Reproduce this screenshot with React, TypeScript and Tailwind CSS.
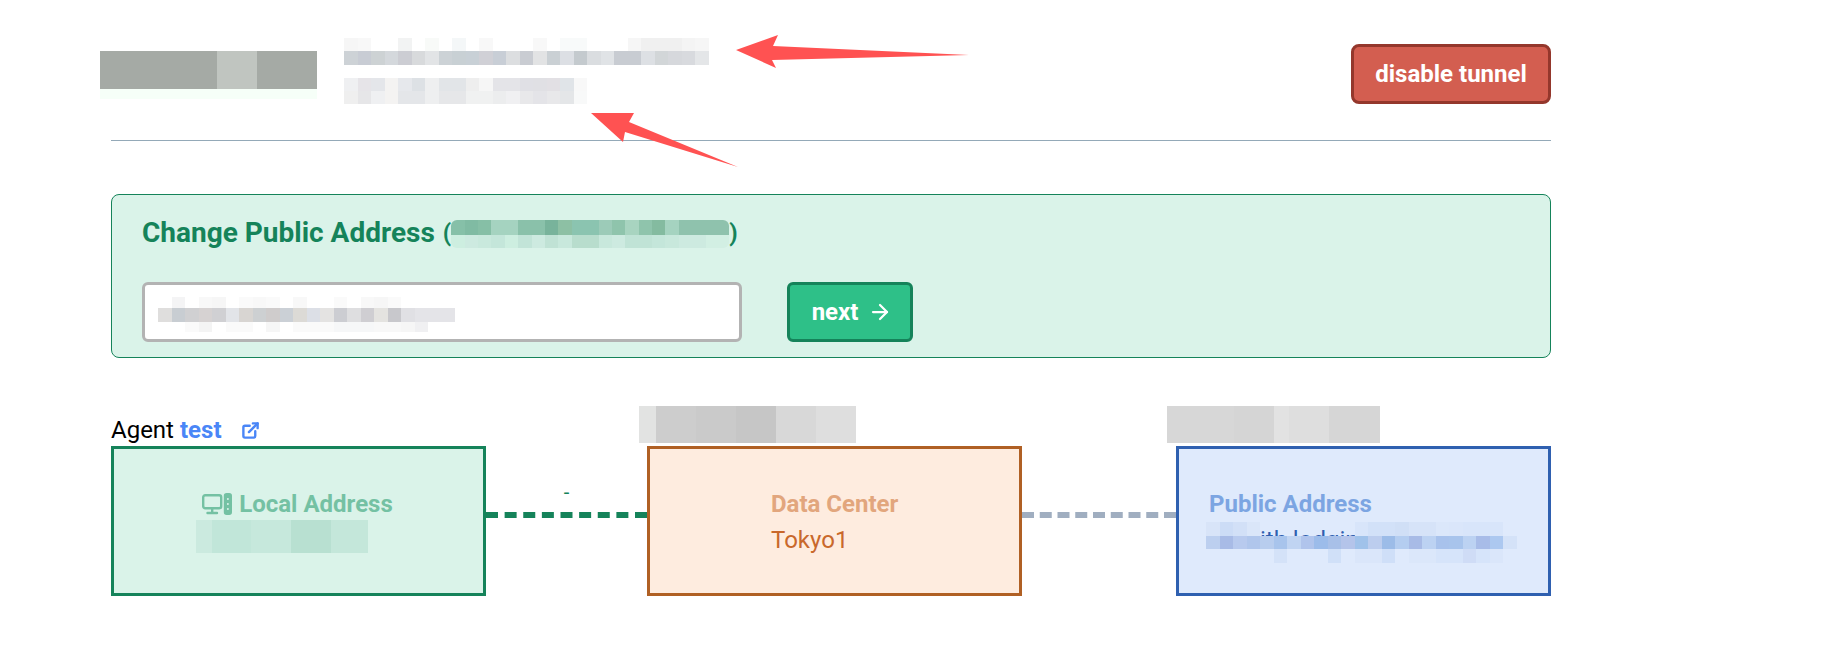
import { ArrowRight, ExternalLink } from 'lucide-react';

// blurred-out blocks of the screenshot, widths given per colour or as one cell size
function Mosaic({ cells, cell, widths, className }: { cells: string[]; cell?: number; widths?: number[]; className?: string }) {
  return (
    <div className={`flex ${className ?? ''}`}>
      {cells.map((c, i) => (
        <div key={i} className="h-full shrink-0" style={{ width: widths ? widths[i] : cell, backgroundColor: c }} />
      ))}
    </div>
  );
}

function PcIcon() {
  return (
    <svg width="30" height="22" viewBox="0 0 30 22" fill="none" stroke="currentColor" strokeWidth="2.4" strokeLinecap="round" strokeLinejoin="round">
      <rect x="1.2" y="2.2" width="18" height="13" rx="2" />
      <path d="M10.2 15.5v4M5.5 20h9.5" />
      <rect x="23" y="1.2" width="5.8" height="19.6" rx="1.6" fill="currentColor" />
      <circle cx="25.9" cy="6" r="1" fill="#daf3e9" stroke="none" />
      <circle cx="25.9" cy="11" r="1" fill="#daf3e9" stroke="none" />
      <circle cx="25.9" cy="16" r="1" fill="#daf3e9" stroke="none" />
    </svg>
  );
}

export default function App() {
  return (
    <div className="relative w-[1830px] h-[666px] overflow-hidden bg-white font-['Roboto',sans-serif]">
      <div className="w-[1440px] ml-[111px]">
        <header className="h-[141px] border-b border-[#94a9b8] flex items-start justify-between">
          <div className="flex">
            <div className="-ml-[11px] mt-[51px] w-[217px]">
              <Mosaic className="h-[38px]" widths={[117, 40, 60]} cells={['#a5aaa5', '#c0c5c0', '#a5aaa5']} />
              <div className="h-[10px] bg-[#f6fff8]" />
            </div>
            <div className="ml-[27px] mt-[38px] w-[364px]">
              <Mosaic className="h-[13px]" cell={13.5} cells={['#f6f6f6', '#f8f8f8', '#fff', '#fff', '#f2f3f3', '#fff', '#f8faf8', '#fff', '#f4f7f8', '#fff', '#f8f8f8', '#fff', '#fff', '#fff', '#f8f8f8', '#fff', '#f8fafa', '#f8fafa', '#fff', '#fff', '#fff', '#f6f6f6', '#f0f0f0', '#f0f0f0', '#f0f0f0', '#f4f4f4', '#f6f6f6']} />
              <Mosaic className="h-[14px]" cell={13.5} cells={['#cdd2d6', '#c8ccd4', '#cdd2d4', '#d4d8dc', '#cccdd3', '#d8dadc', '#e2e4e6', '#ccd2d6', '#c8d0d4', '#c8d0d6', '#d0d0d6', '#c8ced6', '#dcdee0', '#c9ccd2', '#e2e3e4', '#cad0d4', '#dcdfe4', '#c4cace', '#dadde0', '#e0e3e6', '#c8ccd2', '#c8ccd2', '#dde0e4', '#d2d6d8', '#d6d8dc', '#d8dade', '#e4e6e8']} />
              <div className="h-[13px]" />
              <Mosaic className="h-[13px]" cell={13.5} cells={['#eff0f2', '#e6e4e8', '#e4e6ea', '#f4f3f2', '#e6e8ec', '#dde1e5', '#eeeff0', '#e2e5e8', '#e2e5e8', '#eeeeee', '#f6f6f6', '#e4e4e8', '#e4e4e8', '#e0e0e5', '#e0e0e4', '#e2e0e4', '#e0e4e8', '#f8f8f8']} />
              <Mosaic className="h-[13px]" cell={13.5} cells={['#efefef', '#e6e6e8', '#eff0f2', '#f4f3f2', '#e4e6e9', '#e4e6e9', '#eeeff0', '#e6e7e9', '#e6e7e9', '#f0f1f1', '#f0f1f1', '#ecedee', '#f0f0f2', '#e8e8ea', '#e4e4e8', '#e8e8ea', '#e4e6e8', '#f8f9f9']} />
            </div>
          </div>
          <button className="mt-[44px] h-[60px] w-[200px] rounded-[8px] border-[3px] border-[#94372c] bg-[#d35e50] text-[24px] font-bold text-white">
            disable tunnel
          </button>
        </header>

        <section className="mt-[53px] h-[164px] rounded-[8px] border border-[#15835a] bg-[#daf3e9] pl-[30px]">
          <div className="flex items-center h-[87px] pb-[12px]">
            <h2 className="text-[28px] font-bold text-[#15835a]">Change Public Address</h2>
            <span className="ml-[8px] text-[24px] font-bold text-[#15835a]">(</span>
            <div className="w-[278px] h-[28px] mt-[3px] rounded-[6px] overflow-hidden">
              <Mosaic className="h-[15px]" cell={13.4} cells={['#86c0a8', '#80bba3', '#86bfa6', '#a5d3c0', '#a5d3c0', '#8ac1aa', '#8ac1aa', '#78b39b', '#8dc0a4', '#8bc4b0', '#8bc4b0', '#9ccbb8', '#8fc4ac', '#a8d4c0', '#8fc4ac', '#84bba0', '#a5d3c0', '#8fc2ad', '#8fc2ad', '#8fc2ad', '#8fc2ad']} />
              <Mosaic className="h-[13px]" cell={13.4} cells={['#cdeee0', '#cdeae0', '#c9e9dd', '#c4e6da', '#cdeee0', '#c2e4d8', '#cdeae0', '#c0e2d5', '#c8e8dc', '#b8ddcd', '#b8ddcd', '#c8e8dc', '#cdeae0', '#c0e3d6', '#c0e3d6', '#c4e6da', '#c8e8dc', '#cdeae0', '#cdeae0', '#d2efe3', '#d2efe3']} />
            </div>
            <span className="text-[24px] font-bold text-[#15835a]">)</span>
          </div>
          <div className="flex gap-[45px]">
            <div className="w-[600px] h-[60px] rounded-[6px] border-[3px] border-[#b3b3b3] bg-white pl-[13px] pt-[12px]">
              <Mosaic className="h-[11px]" cell={13.5} cells={['#fff', '#f4f4f5', '#fff', '#f8f8f8', '#f6f6f6', '#fff', '#fafafa', '#f8f8f8', '#fafafa', '#fff', '#f8f8f8', '#fff', '#fff', '#fafafa', '#fff', '#f8f8f8', '#f6f6f6', '#fafafa']} />
              <Mosaic className="h-[14px]" cell={13.5} cells={['#dfdedd', '#c8cdd2', '#d0d0d2', '#d6d2d2', '#d0d0d3', '#e2e4e8', '#d8d5d2', '#cdd0d2', '#cfcccc', '#cbd0d6', '#dcdad6', '#dcdfe6', '#e4e3e2', '#cccdd2', '#dedee0', '#cfced2', '#e4e3e0', '#c8c8cc', '#e0e0e4', '#e4e4e8', '#e4e4e8', '#e4e4e8']} />
              <Mosaic className="h-[10px]" cell={13.5} cells={['#fff', '#fff', '#fafafa', '#f4f4f4', '#fff', '#fafafa', '#fafafa', '#fff', '#f6f6f6', '#fff', '#fafafa', '#fafafa', '#fafafa', '#f6f7f8', '#f6f7f8', '#f6f7f8', '#f8f8f8', '#f8f8f8', '#f6f6f6', '#f0f0f2']} />
            </div>
            <button className="w-[126px] h-[60px] rounded-[6px] border-[3px] border-[#15835a] bg-[#2ec088] pl-[4px] text-[24px] font-bold text-white flex items-center justify-center gap-[10px]">
              next
              <ArrowRight className="w-[24px] h-[24px]" strokeWidth={2.25} />
            </button>
          </div>
        </section>

        <section className="mt-[48px] flex">
          <div className="w-[375px] shrink-0">
            <div className="h-[40px] flex items-end pb-[1px] text-[24px] leading-[30px] text-black">
              Agent
              <span className="ml-[6px] font-bold text-[#4a86f7]">test</span>
              <ExternalLink className="ml-[19px] mb-[5px] w-[19px] h-[19px] text-[#4a86f7]" strokeWidth={3} />
            </div>
            <div className="h-[150px] border-[3px] border-[#15835a] bg-[#daf3e9] flex flex-col items-center pt-[40px]">
              <div className="flex items-center gap-[7px] -ml-[2px] text-[24px] leading-[30px] font-bold text-[#74c1a3]">
                <PcIcon />
                Local Address
              </div>
              <Mosaic className="h-[33px] mt-[1px] -ml-[33px]" widths={[16, 39, 40, 40, 37]} cells={['#cbeadf', '#c1e6d9', '#c6e8dc', '#b8e0d1', '#c4e7da']} />
            </div>
          </div>

          <div className="w-[161px] shrink-0 flex flex-col items-center pt-[76px]">
            <span className="text-[20px] leading-[20px] text-[#15835a]">-</span>
            <div className="w-full mt-[10px] border-t-6 border-dashed border-[#15835a]" />
          </div>

          <div className="w-[375px] shrink-0">
            <div className="h-[40px] -ml-[8px]">
              <Mosaic className="h-[37px]" widths={[17, 40, 40, 40, 40, 40]} cells={['#e2e3e2', '#cdcdcd', '#cacaca', '#c6c6c6', '#d8d8d8', '#dedede']} />
            </div>
            <div className="h-[150px] border-[3px] border-[#b06024] bg-[#feecdf] pl-[121px] pt-[40px]">
              <div className="text-[24px] leading-[30px] font-bold text-[#e2a67d]">Data Center</div>
              <div className="text-[24px] leading-[42px] text-[#c9682b]">Tokyo1</div>
            </div>
          </div>

          <div className="w-[154px] shrink-0 pt-[106px]">
            <div className="w-full border-t-6 border-dashed border-[#a0aec0]" />
          </div>

          <div className="w-[375px] shrink-0">
            <div className="h-[40px] -ml-[9px]">
              <Mosaic className="h-[37px]" widths={[67, 40, 15, 40, 51]} cells={['#d7d7d7', '#d5d5d5', '#e2e2e2', '#dedede', '#d6d6d6']} />
            </div>
            <div className="relative h-[150px] border-[3px] border-[#2f60b0] bg-[#dfeafc] pl-[30px] pt-[40px]">
              <div className="text-[24px] leading-[30px] font-bold text-[#7ca5e2]">Public Address</div>
              <div className="absolute left-[81px] top-[76px] text-[24px] leading-[30px] text-[#2f60b0]">ith lodgin</div>
              <div className="absolute left-[27px] top-[73px] w-[311px]">
                <Mosaic className="h-[14px]" cell={13.5} cells={['#d8e4f8', '#ccdcf6', '#d2e0f7', '#dae6f9', 'transparent', 'transparent', 'transparent', 'transparent', 'transparent', 'transparent', 'transparent', '#d8e5fa', '#d2e1f8', '#d2e1f8', '#d0dff6', '#d6e3f8', '#d6e3f8', '#dbe7fa', '#dae6fa', '#d8e5fa', '#d8e5fa', '#d8e5fa']} />
                <Mosaic className="h-[13px]" cell={13.5} cells={['#bccfef', '#a8bbe6', '#b8caee', '#b0c6ec', '#b8cdee', '#a8c4ec', '#c0d4f2', '#b0c4ec', '#9cbcea', '#a8c0e8', '#b4c4ea', '#a0c2ea', '#bccdee', '#9cbce8', '#b4cdf0', '#a8bbe6', '#bcd2f2', '#a8c2ec', '#a8c4ec', '#bcd2f2', '#a8bce8', '#acc8f0', '#d4e2f8']} />
                <Mosaic className="h-[14px]" cell={13.5} cells={['#dfeafc', '#dfeafc', '#dfeafc', '#dfeafc', '#dfeafc', '#d4e2f8', '#dfeafc', '#dfeafc', '#dfeafc', '#d0e0f8', '#dfeafc', '#dae6fa', '#dae6fa', '#cfdff8', '#dfeafc', '#dbe7fa', '#dbe7fa', '#d6e4fa', '#d6e4fa', '#cfdcf6', '#d6e4fa', '#dae6fa']} />
              </div>
            </div>
          </div>
        </section>
      </div>

      {/* red annotation arrows */}
      <svg className="absolute left-0 top-0 pointer-events-none" width="1830" height="666">
        <polygon points="736,50 778,35 773,46 969,55 772,60 776,68" fill="#ff5252" />
        <polygon points="591,113 634,113 629,122 738,167 625,132 623,142" fill="#ff5252" />
      </svg>
    </div>
  );
}
